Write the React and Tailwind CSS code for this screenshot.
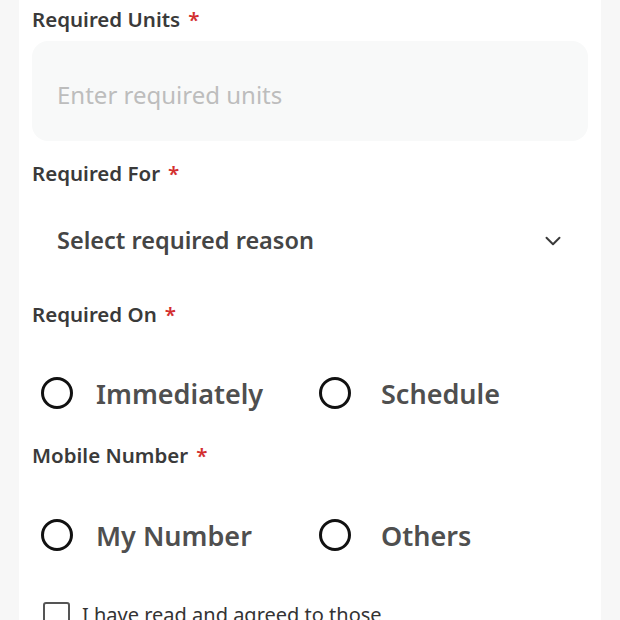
import { ChevronDown } from 'lucide-react'

const font = { fontFamily: '"Noto Sans", "Open Sans", sans-serif' }

function Label({ children, className }) {
  return (
    <div className={`h-[24px] shrink-0 flex items-center text-[20.5px] font-semibold text-[#3a3a3a] leading-none ${className}`}>
      <span>{children}</span>
      <span className="ml-[8px] text-[#d32f2f]">*</span>
    </div>
  )
}

function Radio({ label, gap }) {
  return (
    <div className="flex items-center pl-[9px]">
      <span className="w-[32px] h-[32px] rounded-full border-[3px] border-[#111] shrink-0" />
      <span className={`${gap} text-[27px] font-semibold text-[#4f4f4f] leading-none`}>{label}</span>
    </div>
  )
}

export default function App() {
  return (
    <div className="w-[620px] h-[620px] overflow-hidden bg-[#f7f7f7]" style={font}>
      <div className="mx-[19px] w-[582px] h-full bg-white px-[13px] pt-[7px] flex flex-col">
        <Label>Required Units</Label>
        <div className="mt-[10px] h-[100px] w-[556px] rounded-[16px] bg-[#f8f9f9] flex items-center px-[25px] pt-[8px] shrink-0">
          <span className="text-[24px] text-[#bdbdbd]">Enter required units</span>
        </div>

        <Label className="mt-[20px]">Required For</Label>
        <div className="mt-[16px] h-[80px] flex items-center justify-between px-[25px] shrink-0">
          <span className="text-[23.5px] font-semibold text-[#454545]">Select required reason</span>
          <ChevronDown size={26} strokeWidth={1.8} className="text-[#3a3a3a] mr-[-3px]" />
        </div>

        <Label className="mt-[21px]">Required On</Label>
        <div className="mt-[27px] grid grid-cols-2 h-[80px] items-center shrink-0">
          <Radio label="Immediately" gap="ml-[23px]" />
          <Radio label="Schedule" gap="ml-[30px]" />
        </div>

        <Label className="mt-[10px]">Mobile Number</Label>
        <div className="mt-[28px] grid grid-cols-2 h-[80px] items-center shrink-0">
          <Radio label="My Number" gap="ml-[23px]" />
          <Radio label="Others" gap="ml-[30px]" />
        </div>

        <div className="mt-[27px] h-[26px] flex items-start pl-[11px] shrink-0">
          <span className="w-[27px] h-[27px] rounded-[3px] border-[2.5px] border-[#555] shrink-0" />
          <span className="ml-[12px] mt-[3px] text-[20px] text-[#333] leading-none">I have read and agreed to those</span>
        </div>
      </div>
    </div>
  )
}
